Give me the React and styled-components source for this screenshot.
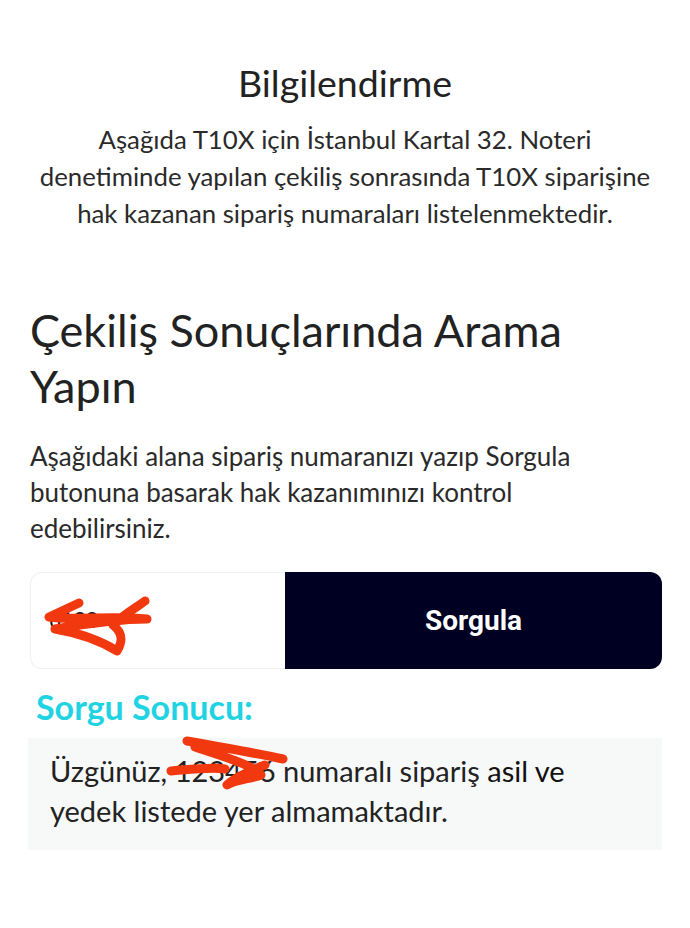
import React from "react";
import styled, { createGlobalStyle } from "styled-components";

const GlobalStyle = createGlobalStyle`
  body {
    margin: 0;
    background: #ffffff;
    font-family: "Lato", "Noto Sans", sans-serif;
    color: #222;
  }
`;

function Scribble({ d, width, height }) {
  return (
    <ScribbleSvg width={width} height={height} viewBox={`0 0 ${width} ${height}`}>
      <path
        d={d}
        fill="none"
        stroke="#f2380f"
        strokeWidth="9"
        strokeLinecap="round"
        strokeLinejoin="round"
      />
    </ScribbleSvg>
  );
}

function App() {
  return (
    <Page>
      <GlobalStyle />
      <Info>
        <InfoTitle>Bilgilendirme</InfoTitle>
        <InfoText>
          Aşağıda T10X için İstanbul Kartal 32. Noteri denetiminde yapılan
          çekiliş sonrasında T10X siparişine hak kazanan sipariş numaraları
          listelenmektedir.
        </InfoText>
      </Info>

      <Search>
        <SearchTitle>Çekiliş Sonuçlarında Arama Yapın</SearchTitle>
        <SearchText>
          Aşağıdaki alana sipariş numaranızı yazıp Sorgula butonuna basarak
          hak kazanımınızı kontrol edebilirsiniz.
        </SearchText>

        <Form>
          <InputWrap>
            <OrderInput defaultValue="0123" />
            <Scribble
              width={116}
              height={62}
              d="M40 8 L10 22 C34 26 70 20 108 24 C84 24 52 28 16 34 C40 38 62 46 78 56 C84 46 84 38 74 30 C84 20 98 12 106 6"
            />
          </InputWrap>
          <QueryButton type="button">Sorgula</QueryButton>
        </Form>
      </Search>

      <ResultLabel>Sorgu Sonucu:</ResultLabel>
      <ResultBox>
        <ResultText>
          Üzgünüz,{" "}
          <Masked>
            123456
            <Scribble
              width={130}
              height={56}
              d="M6 36 C30 34 46 32 60 34 M22 6 C56 12 90 18 118 24 M30 12 C60 22 88 30 96 40 C86 44 72 44 62 50 C70 42 84 36 100 30"
            />
          </Masked>{" "}
          numaralı sipariş <Strong>asil ve</Strong> yedek listede yer
          almamaktadır.
        </ResultText>
      </ResultBox>
    </Page>
  );
}

const Page = styled.div`
  width: 690px;
  min-height: 928px;
  box-sizing: border-box;
  padding: 59px 28px 60px 28px;
`;

const Info = styled.section`
  text-align: center;
  padding: 0 8px;
`;

const InfoTitle = styled.h2`
  margin: 0 0 14px;
  font-size: 37.5px;
  font-weight: 400;
  line-height: 48px;
  color: #222;
`;

const InfoText = styled.p`
  margin: 0;
  font-size: 25.8px;
  line-height: 37px;
  color: #2a2a2a;
`;

const Search = styled.section`
  margin-top: 70px;
  padding: 0 2px;
`;

const SearchTitle = styled.h2`
  margin: 0 0 24px;
  font-size: 45px;
  font-weight: 400;
  line-height: 56px;
  color: #222;
`;

const SearchText = styled.p`
  margin: 0;
  max-width: 590px;
  font-size: 26px;
  line-height: 36px;
  color: #2a2a2a;
`;

const Form = styled.div`
  display: flex;
  margin-top: 26px;
  height: 97px;
  width: 632px;
`;

const InputWrap = styled.div`
  position: relative;
  width: 255px;
  box-sizing: border-box;
  border: 1.5px solid #eef0f2;
  border-right: none;
  border-radius: 12px 0 0 12px;
  background: #fff;
  display: flex;
  align-items: center;
  padding-left: 16px;

  svg {
    left: 8px;
    top: 22px;
  }
`;

const OrderInput = styled.input`
  border: none;
  outline: none;
  width: 100%;
  font-family: "Roboto", sans-serif;
  font-size: 22px;
  color: #111;
  background: transparent;
`;

const ScribbleSvg = styled.svg`
  position: absolute;
  pointer-events: none;
`;

const QueryButton = styled.button`
  flex: 1;
  border: none;
  border-radius: 0 12px 12px 0;
  background: #000022;
  color: #fff;
  font-family: "Roboto", sans-serif;
  font-weight: 700;
  font-size: 28px;
  cursor: pointer;
`;

const ResultLabel = styled.h3`
  margin: 18px 0 11px 8px;
  font-size: 34px;
  font-weight: 700;
  line-height: 40px;
  color: #1fd3e3;
`;

const ResultBox = styled.div`
  width: 634px;
  background: #f7f8f8;
  padding: 13px 22px 19px;
  box-sizing: border-box;
`;

const ResultText = styled.p`
  margin: 0;
  max-width: 560px;
  font-size: 29px;
  line-height: 40px;
  color: #222;
`;

const Masked = styled.span`
  position: relative;

  svg {
    left: -10px;
    top: -18px;
  }
`;

const Strong = styled.span`
  color: #111;
`;

export default App;
